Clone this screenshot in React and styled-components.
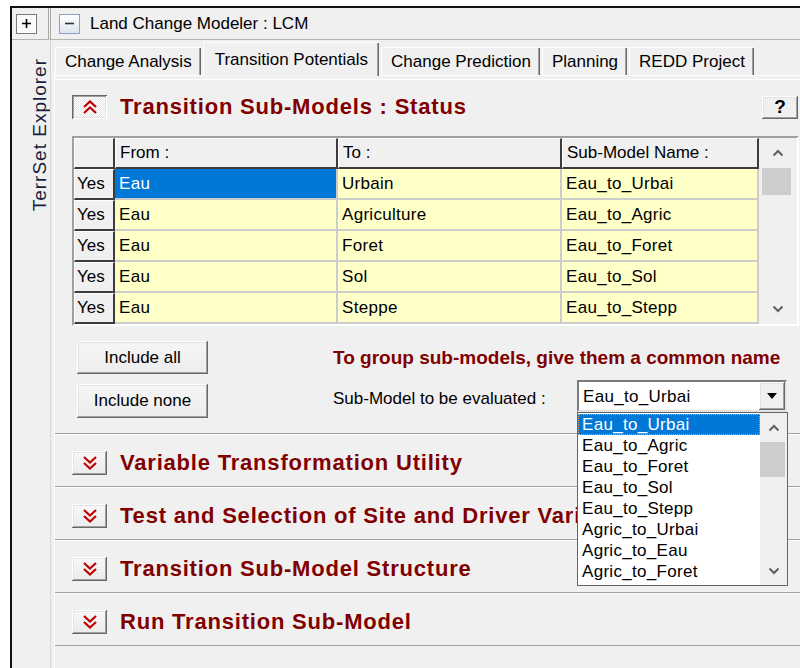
import React from 'react';
import styled, { createGlobalStyle } from 'styled-components';

const GlobalStyle = createGlobalStyle`
  html, body {
    margin: 0;
    padding: 0;
    background: #fff;
  }
  body {
    font-family: "Liberation Sans", Arial, sans-serif;
    font-size: 17px;
    color: #000;
  }
`;

const raised = `
  box-shadow: inset -1px -1px #696969, inset 1px 1px #fff, inset -2px -2px #a0a0a0, inset 2px 2px #e3e3e3;
`;

const sunken = `
  box-shadow: inset 1px 1px #696969, inset -1px -1px #fff, inset 2px 2px #a0a0a0, inset -2px -2px #e3e3e3;
`;

const Page = styled.div`
  width: 800px;
  height: 668px;
  padding: 6px 0 0 10px;
  box-sizing: border-box;
  overflow: hidden;
  background: #fff;
`;

const Frame = styled.div`
  height: 100%;
  box-sizing: border-box;
  border-top: 2px solid #111;
  border-left: 2px solid #111;
  background: #f0f0f0;
  display: grid;
  grid-template-columns: 39px 1fr;
  grid-template-rows: 32px 1fr;
`;

const TopLeft = styled.div`
  display: flex;
  align-items: center;
  padding-left: 4px;
  border-right: 3px double #a8a8a8;
  border-bottom: 1px solid #b4b4b4;
`;

const TopBar = styled.div`
  display: flex;
  align-items: center;
  gap: 10px;
  padding-left: 8px;
  border-bottom: 1px solid #b4b4b4;
  white-space: nowrap;
`;

const ToggleBox = styled.div`
  width: 21px;
  height: 20px;
  box-sizing: border-box;
  display: flex;
  align-items: center;
  justify-content: center;
  border: 1px solid ${p => (p.$blue ? '#87a3c9' : '#7a7a7a')};
  background: ${p => (p.$blue ? 'linear-gradient(#ffffff, #dde5ef)' : '#fbfbfb')};
`;

const Title = styled.span`
  font-size: 17px;
`;

const Sidebar = styled.div`
  padding: 18px 0 0 18px;
  border-right: 1px solid #d6d6d6;
`;

const VerticalLabel = styled.div`
  display: inline-block;
  writing-mode: vertical-rl;
  transform: rotate(180deg);
  font-size: 19px;
  line-height: 19px;
  letter-spacing: 1px;
  color: #1c1c3c;
  white-space: nowrap;
`;

const Main = styled.div`
  display: flex;
  flex-direction: column;
  min-width: 0;
`;

const TabStrip = styled.div`
  display: flex;
  align-items: flex-end;
  gap: 2px;
  padding: 2px 0 0 4px;
  position: relative;
  z-index: 1;
`;

const Tab = styled.div`
  height: ${p => (p.$active ? '34px' : '28px')};
  margin-bottom: ${p => (p.$active ? '-1px' : '0')};
  padding: 0 ${p => (p.$active ? '11px' : '9px')};
  display: flex;
  align-items: center;
  box-sizing: border-box;
  background: #f0f0f0;
  border-top: 1px solid #fff;
  border-left: 1px solid #fff;
  box-shadow: inset -1px 0 #696969, inset -2px 0 #a0a0a0;
  font-size: 17px;
  white-space: nowrap;
`;

const TabPanel = styled.div`
  flex: 1;
  margin-left: 3px;
  padding-top: 3px;
  border-top: 1px solid #fff;
  border-left: 1px solid #fff;
`;

const Section = styled.div`
  position: relative;
  padding: ${p => (p.$open ? '15px 2px 15px 17px' : '16px 2px 0 17px')};
  height: ${p => (p.$open ? 'auto' : '53px')};
  box-sizing: border-box;
  border-top: 1px solid #fff;
  border-bottom: 1px solid #a0a0a0;
  white-space: nowrap;
`;

const SectionHeader = styled.div`
  display: flex;
  align-items: center;
  height: 24px;
`;

const FoldButton = styled.div`
  width: 35px;
  height: 24px;
  flex: none;
  display: flex;
  align-items: center;
  justify-content: center;
  ${p => (p.$open ? sunken : raised)}
  background: ${p =>
    p.$open
      ? 'repeating-conic-gradient(#ffffff 0 25%, #e6e6e6 0 50%) 0 0 / 2px 2px'
      : 'linear-gradient(#f8f8f8, #ebebeb)'};
`;

const SectionTitle = styled.span`
  margin-left: 13px;
  font-size: 22px;
  font-weight: bold;
  letter-spacing: 0.8px;
  color: #800000;
`;

const HelpButton = styled.div`
  margin-left: auto;
  width: 36px;
  height: 23px;
  display: flex;
  align-items: center;
  justify-content: center;
  ${raised}
  font-size: 19px;
  font-weight: bold;
`;

const TableFrame = styled.div`
  margin-top: 17px;
  width: 723px;
  display: flex;
  border: 2px solid;
  border-color: #a0a0a0 #fff #fff #a0a0a0;
  background: #f0f0f0;
`;

const DataGrid = styled.div`
  display: grid;
  grid-template-columns: 41px 223px 224px 197px;
  grid-auto-rows: 31px;
`;

const HeadCell = styled.div`
  display: flex;
  align-items: center;
  padding-left: ${p => (p.$center ? '2px' : '4px')};
  background: #f0f0f0;
  border-top: 1px solid #fff;
  border-left: 1px solid #fff;
  border-right: 2px solid #3c3c3c;
  border-bottom: 2px solid #3c3c3c;
  font-size: 17px;
`;

const DataCell = styled.div`
  display: flex;
  align-items: center;
  padding-left: 4px;
  background: ${p => (p.$selected ? '#0078d7' : '#ffffc8')};
  color: ${p => (p.$selected ? '#fff' : '#000')};
  border-right: 2px solid #cccccc;
  border-bottom: 2px solid #cccccc;
  font-size: 17px;
  letter-spacing: 0.3px;
`;

const ScrollBar = styled.div`
  width: ${p => p.$w}px;
  flex: none;
  display: flex;
  flex-direction: column;
  padding-left: ${p => p.$pad}px;
  box-sizing: border-box;
  background: #f0f0f0;
`;

const ScrollArrow = styled.div`
  height: ${p => p.$h}px;
  display: flex;
  align-items: center;
  justify-content: center;
`;

const ScrollTrack = styled.div`
  flex: 1;
`;

const Thumb = styled.div`
  height: ${p => p.$h}px;
  margin-right: 2px;
  background: #cdcdcd;
`;

const Controls = styled.div`
  margin: 15px 0 0 5px;
  display: grid;
  grid-template-columns: 131px auto;
  grid-template-rows: 33px 34px;
  column-gap: 125px;
  row-gap: 10px;
`;

const PushButton = styled.div`
  display: flex;
  align-items: center;
  justify-content: center;
  ${raised}
  background: linear-gradient(#f6f6f6, #ececec);
  font-size: 17px;
`;

const Note = styled.div`
  align-self: center;
  font-size: 19px;
  font-weight: bold;
  color: #800000;
`;

const ComboRow = styled.div`
  display: flex;
  align-items: flex-start;
`;

const ComboLabel = styled.span`
  width: 244px;
  line-height: 30px;
  font-size: 17px;
`;

const Combo = styled.div`
  position: relative;
  margin-top: -4px;
  width: 210px;
  height: 32px;
  box-sizing: border-box;
  display: flex;
  align-items: stretch;
  background: #fff;
  border: 2px solid;
  border-color: #7a7a7a #e3e3e3 #e3e3e3 #7a7a7a;
`;

const ComboValue = styled.span`
  flex: 1;
  padding-left: 4px;
  line-height: 30px;
  font-size: 17px;
  letter-spacing: 0.3px;
`;

const ComboButton = styled.div`
  width: 26px;
  display: flex;
  align-items: center;
  justify-content: center;
  ${raised}
  background: #f0f0f0;
`;

const DropList = styled.div`
  position: absolute;
  top: calc(100% + 2px);
  left: -2px;
  width: 211px;
  height: 174px;
  box-sizing: border-box;
  z-index: 10;
  display: flex;
  border: 1px solid #646464;
  background: #fff;
  overflow: hidden;
`;

const Options = styled.div`
  flex: 1;
  padding-top: 1px;
`;

const Option = styled.div`
  height: 21px;
  line-height: 21px;
  padding-left: 4px;
  font-size: 17px;
  letter-spacing: 0.3px;
  background: ${p => (p.$selected ? '#0078d7' : 'transparent')};
  color: ${p => (p.$selected ? '#fff' : '#000')};
  outline: ${p => (p.$selected ? '1px dotted #f0a040' : 'none')};
  outline-offset: -1px;
`;

const Chevrons = ({ up }) => (
  <svg width="18" height="16" viewBox="0 0 18 16">
    <g fill="none" stroke="#c00000" strokeWidth="2.2">
      {up ? (
        <>
          <polyline points="3,8 9,2.5 15,8" />
          <polyline points="3,14 9,8.5 15,14" />
        </>
      ) : (
        <>
          <polyline points="3,2 9,7.5 15,2" />
          <polyline points="3,8 9,13.5 15,8" />
        </>
      )}
    </g>
  </svg>
);

const Caret = ({ up }) => (
  <svg width="12" height="8" viewBox="0 0 12 8">
    <polyline
      points={up ? '1.5,6.5 6,2 10.5,6.5' : '1.5,1.5 6,6 10.5,1.5'}
      fill="none"
      stroke="#606060"
      strokeWidth="2"
    />
  </svg>
);

const Scroller = ({ w, pad, arrowH, thumbH }) => (
  <ScrollBar $w={w} $pad={pad}>
    <ScrollArrow $h={arrowH}>
      <Caret up />
    </ScrollArrow>
    <ScrollTrack>
      <Thumb $h={thumbH} />
    </ScrollTrack>
    <ScrollArrow $h={arrowH}>
      <Caret />
    </ScrollArrow>
  </ScrollBar>
);

const tabs = ['Change Analysis', 'Transition Potentials', 'Change Prediction', 'Planning', 'REDD Project'];

const transitions = [
  ['Urbain', 'Eau_to_Urbai'],
  ['Agriculture', 'Eau_to_Agric'],
  ['Foret', 'Eau_to_Foret'],
  ['Sol', 'Eau_to_Sol'],
  ['Steppe', 'Eau_to_Stepp'],
];

const subModels = [
  'Eau_to_Urbai',
  'Eau_to_Agric',
  'Eau_to_Foret',
  'Eau_to_Sol',
  'Eau_to_Stepp',
  'Agric_to_Urbai',
  'Agric_to_Eau',
  'Agric_to_Foret',
];

const collapsed = [
  'Variable Transformation Utility',
  'Test and Selection of Site and Driver Variables',
  'Transition Sub-Model Structure',
  'Run Transition Sub-Model',
];

export default function App() {
  return (
    <Page>
      <GlobalStyle />
      <Frame>
        <TopLeft>
          <ToggleBox>
            <svg width="11" height="11" viewBox="0 0 11 11">
              <path d="M5.5 1v9M1 5.5h9" stroke="#000" strokeWidth="1.6" />
            </svg>
          </ToggleBox>
        </TopLeft>
        <TopBar>
          <ToggleBox $blue>
            <svg width="11" height="11" viewBox="0 0 11 11">
              <path d="M1 5.5h9" stroke="#333" strokeWidth="1.6" />
            </svg>
          </ToggleBox>
          <Title>Land Change Modeler : LCM</Title>
        </TopBar>

        <Sidebar>
          <VerticalLabel>TerrSet Explorer</VerticalLabel>
        </Sidebar>

        <Main>
          <TabStrip>
            {tabs.map(t => (
              <Tab key={t} $active={t === 'Transition Potentials'}>
                {t}
              </Tab>
            ))}
          </TabStrip>

          <TabPanel>
            <Section $open>
              <SectionHeader>
                <FoldButton $open>
                  <Chevrons up />
                </FoldButton>
                <SectionTitle>Transition Sub-Models : Status</SectionTitle>
                <HelpButton>?</HelpButton>
              </SectionHeader>

              <TableFrame>
                <DataGrid>
                  <HeadCell />
                  <HeadCell>From :</HeadCell>
                  <HeadCell>To :</HeadCell>
                  <HeadCell>Sub-Model Name :</HeadCell>
                  {transitions.map(([to, name], i) => (
                    <React.Fragment key={name}>
                      <HeadCell $center>Yes</HeadCell>
                      <DataCell $selected={i === 0}>Eau</DataCell>
                      <DataCell>{to}</DataCell>
                      <DataCell>{name}</DataCell>
                    </React.Fragment>
                  ))}
                </DataGrid>
                <Scroller w={34} pad={3} arrowH={30} thumbH={27} />
              </TableFrame>

              <Controls>
                <PushButton>Include all</PushButton>
                <Note>To group sub-models, give them a common name</Note>
                <PushButton>Include none</PushButton>
                <ComboRow>
                  <ComboLabel>Sub-Model to be evaluated :</ComboLabel>
                  <Combo>
                    <ComboValue>Eau_to_Urbai</ComboValue>
                    <ComboButton>
                      <svg width="10" height="6" viewBox="0 0 10 6">
                        <polygon points="0,0 10,0 5,6" fill="#000" />
                      </svg>
                    </ComboButton>
                    <DropList>
                      <Options>
                        {subModels.map((m, i) => (
                          <Option key={m} $selected={i === 0}>
                            {m}
                          </Option>
                        ))}
                      </Options>
                      <Scroller w={27} pad={0} arrowH={29} thumbH={35} />
                    </DropList>
                  </Combo>
                </ComboRow>
              </Controls>
            </Section>

            {collapsed.map(title => (
              <Section key={title}>
                <SectionHeader>
                  <FoldButton>
                    <Chevrons />
                  </FoldButton>
                  <SectionTitle>{title}</SectionTitle>
                </SectionHeader>
              </Section>
            ))}
          </TabPanel>
        </Main>
      </Frame>
    </Page>
  );
}
